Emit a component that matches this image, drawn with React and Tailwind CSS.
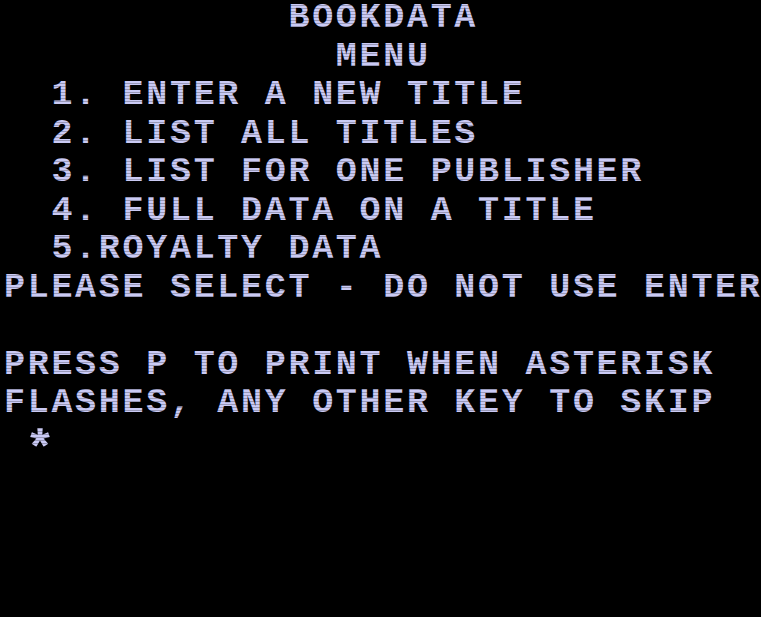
import React from "react";

const lines = [
  "            BOOKDATA",
  "              MENU",
  "  1. ENTER A NEW TITLE",
  "  2. LIST ALL TITLES",
  "  3. LIST FOR ONE PUBLISHER",
  "  4. FULL DATA ON A TITLE",
  "  5.ROYALTY DATA",
  "PLEASE SELECT - DO NOT USE ENTER",
  "",
  "PRESS P TO PRINT WHEN ASTERISK",
  "FLASHES, ANY OTHER KEY TO SKIP",
];

export default function App() {
  return (
    <div className="relative w-[761px] h-[617px] overflow-hidden bg-black">
      <div className="pl-[4px] -mt-[1px] font-['Liberation_Mono',monospace] font-bold text-[35px] leading-[38.56px] tracking-[2.7px] text-[#cacaf4] whitespace-pre">
        {lines.map((line, i) => (
          <div key={i} className="h-[38.56px]">
            {line}
          </div>
        ))}
        <div className="h-[38.56px]">
          {" "}
          <span className="inline-block translate-x-[2px] translate-y-[9px] scale-[1.45]">*</span>
        </div>
      </div>
      <div className="pointer-events-none absolute inset-0 bg-[repeating-linear-gradient(to_bottom,transparent_0px,transparent_2px,rgba(0,0,0,0.25)_2px,rgba(0,0,0,0.25)_3px)]" />
    </div>
  );
}
